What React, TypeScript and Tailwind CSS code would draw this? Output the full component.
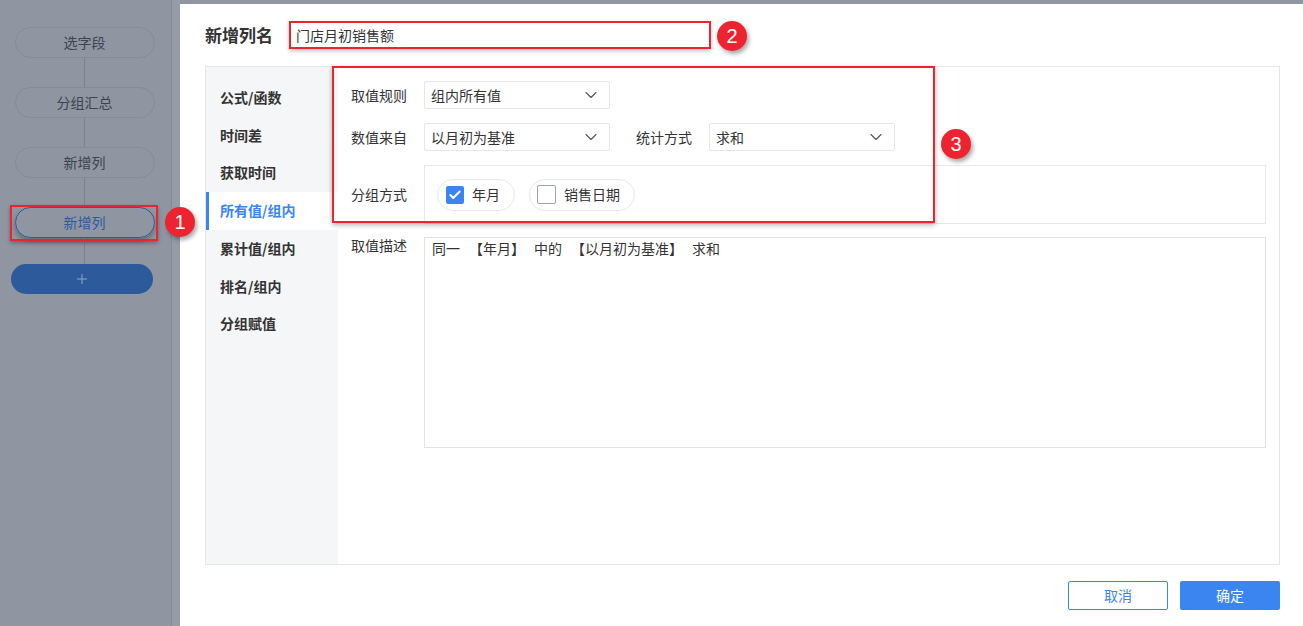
import { ChevronDown, Check, Plus } from "lucide-react";

const font = { fontFamily: '"Noto Sans CJK SC", "Noto Sans", sans-serif' };

const steps = ["选字段", "分组汇总", "新增列"];
const navItems = ["公式/函数", "时间差", "获取时间", "所有值/组内", "累计值/组内", "排名/组内", "分组赋值"];

function Marker({ n, className }: { n: number; className: string }) {
  return (
    <div
      className={`absolute flex h-[30px] w-[30px] items-center justify-center rounded-full bg-[#ee2330] text-[20px] leading-none text-white shadow-[2px_3px_4px_rgba(0,0,0,0.35)] ${className}`}
      style={{ fontFamily: '"Liberation Sans", Arial, sans-serif' }}
    >
      {n}
    </div>
  );
}

function Select({ value, className }: { value: string; className?: string }) {
  return (
    <div
      className={`flex h-[28px] w-[186px] items-center justify-between rounded-[2px] border border-[#e6e6e6] bg-white pl-[6px] pr-[8px] text-[14px] text-[#333] ${className ?? ""}`}
    >
      <span>{value}</span>
      <ChevronDown className="h-[20px] w-[20px] text-[#555]" strokeWidth={1.3} />
    </div>
  );
}

const Gap = () => <span className="inline-block w-[9px]" />;

export default function App() {
  return (
    <div className="relative flex h-[626px] w-[1303px] overflow-hidden bg-white" style={font}>
      {/* dimmed step sidebar */}
      <div className="flex w-[180px] shrink-0 bg-[#8f96a1]">
        <div className="flex w-[172px] flex-col items-center border-r border-[#848b96] pt-[27px]">
          {steps.map((s) => (
            <div key={s} className="mr-[2px] flex flex-col items-center">
              <div className="flex h-[31px] w-[140px] items-center justify-center rounded-full border border-[#858c98] text-[14px] text-[#3c4452]">
                {s}
              </div>
              <div className="h-[29px] w-px bg-[#7b828e]" />
            </div>
          ))}
          <div className="mr-[2px] flex h-[31px] w-[140px] items-center justify-center rounded-full border border-[#2f5a9c] text-[14px] text-[#2f5aa0] shadow-[0_3px_5px_rgba(0,0,0,0.3)]">
            新增列
          </div>
          <div className="mr-[2px] h-[26px] w-px bg-[#7b828e]" />
          <div className="mr-[8px] flex h-[30px] w-[142px] items-center justify-center rounded-full bg-[#2c5a9b]">
            <Plus className="h-[16px] w-[16px] text-[#8fa4c4]" strokeWidth={1.5} />
          </div>
        </div>
        <div className="flex-1 bg-[#959ca7]" />
      </div>

      {/* dialog */}
      <div className="flex flex-1 flex-col">
        <div className="h-[4px] bg-[#8f96a1]" />
        <div className="flex flex-1 flex-col pl-[25px] pr-[23px] pt-[17px]">
          <div className="flex items-center">
            <span className="w-[84px] text-[17px] font-bold text-[#333]">新增列名</span>
            <div className="flex h-[28px] w-[422px] items-center border-2 border-[#ee2330] pl-[5px] text-[14px] text-[#333] shadow-[0_2px_4px_rgba(0,0,0,0.25)]">
              门店月初销售额
            </div>
          </div>

          <div className="mt-[17px] flex h-[499px] border border-[#e6e6e6]">
            <div className="flex w-[132px] flex-col bg-[#f5f6f8] pt-[12px]">
              {navItems.map((item, i) =>
                i === 3 ? (
                  <div
                    key={item}
                    className="flex h-[38px] items-center border-l-[3px] border-[#3a85f0] bg-white pl-[11px] text-[14px] font-bold text-[#3a85f0]"
                  >
                    {item}
                  </div>
                ) : (
                  <div key={item} className="flex h-[37.6px] items-center pl-[14px] text-[14px] font-bold text-[#333]">
                    {item}
                  </div>
                )
              )}
            </div>

            <div className="flex flex-1 flex-col gap-[14px] pl-[13px] pr-[13px] pt-[14px] text-[14px] text-[#333]">
              <div className="flex items-center">
                <span className="w-[73px]">取值规则</span>
                <Select value="组内所有值" />
              </div>
              <div className="flex items-center">
                <span className="w-[73px]">数值来自</span>
                <Select value="以月初为基准" />
                <span className="ml-[26px] w-[73px]">统计方式</span>
                <Select value="求和" />
              </div>
              <div className="flex items-center">
                <span className="w-[73px]">分组方式</span>
                <div className="flex h-[59px] flex-1 items-center gap-[14px] border border-[#e8e8e8] pl-[12px]">
                  <div className="flex h-[32px] items-center gap-[8px] rounded-full border border-[#e8e8e8] pl-[8px] pr-[14px]">
                    <span className="flex h-[18px] w-[18px] items-center justify-center rounded-[2px] bg-[#3a85f0]">
                      <Check className="h-[14px] w-[14px] text-white" strokeWidth={3.5} />
                    </span>
                    年月
                  </div>
                  <div className="flex h-[32px] items-center gap-[8px] rounded-full border border-[#e8e8e8] pl-[7px] pr-[14px]">
                    <span className="h-[19px] w-[19px] rounded-[2px] border border-[#9ca3b0] bg-white" />
                    销售日期
                  </div>
                </div>
              </div>
              <div className="-mt-[1px] flex items-start">
                <span className="w-[73px] -mt-[2px]">取值描述</span>
                <div className="h-[211px] flex-1 border border-[#e3e3e3] pl-[7px] leading-[20px]">
                  同一<Gap />【年月】<Gap />中的<Gap />【以月初为基准】<Gap />求和
                </div>
              </div>
            </div>
          </div>

          <div className="mt-[16px] flex justify-end gap-[12px]">
            <button className="h-[29px] w-[100px] rounded-[2px] border border-[#3a85f0] bg-white text-[14px] text-[#3a85f0]">
              取消
            </button>
            <button className="h-[29px] w-[100px] rounded-[2px] bg-[#3a85f0] text-[14px] text-white">
              确定
            </button>
          </div>
        </div>
      </div>

      {/* annotations */}
      <div className="absolute left-[10px] top-[205px] h-[36px] w-[148px] border-2 border-[#ee2330] shadow-[0_2px_4px_rgba(0,0,0,0.3)]" />
      <div className="absolute left-[332px] top-[66px] h-[157px] w-[603px] border-2 border-[#ee2330] shadow-[0_2px_5px_rgba(0,0,0,0.3)]" />
      <Marker n={1} className="left-[165px] top-[207px]" />
      <Marker n={2} className="left-[717px] top-[21px]" />
      <Marker n={3} className="left-[941px] top-[129px]" />
    </div>
  );
}
